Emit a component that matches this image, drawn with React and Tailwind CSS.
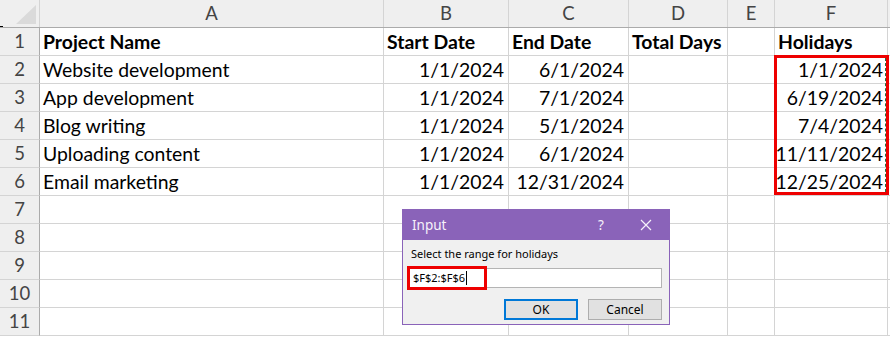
import React from 'react';

const cols = [
  { key: 'A', w: 'w-[344px]' },
  { key: 'B', w: 'w-[125px]' },
  { key: 'C', w: 'w-[120px]' },
  { key: 'D', w: 'w-[99px]' },
  { key: 'E', w: 'w-[47px]' },
  { key: 'F', w: 'w-[113px]' },
];

const rows = [
  ['Project Name', 'Start Date', 'End Date', 'Total Days', '', 'Holidays'],
  ['Website development', '1/1/2024', '6/1/2024', '', '', '1/1/2024'],
  ['App development', '1/1/2024', '7/1/2024', '', '', '6/19/2024'],
  ['Blog writing', '1/1/2024', '5/1/2024', '', '', '7/4/2024'],
  ['Uploading content', '1/1/2024', '6/1/2024', '', '', '11/11/2024'],
  ['Email marketing', '1/1/2024', '12/31/2024', '', '', '12/25/2024'],
  ['', '', '', '', '', ''],
  ['', '', '', '', '', ''],
  ['', '', '', '', '', ''],
  ['', '', '', '', '', ''],
  ['', '', '', '', '', ''],
];

function Cell({ col, value, header, ci }) {
  // dates are right aligned, text left aligned (like Excel)
  const right = !header && ci > 0;
  return (
    <div
      className={`${col.w} h-[28px] shrink-0 border-r border-b border-[#d4d4d4] flex items-center ${
        right ? 'justify-end pr-[4px]' : 'justify-start pl-[3px]'
      } ${header ? 'font-bold' : ''} whitespace-nowrap overflow-visible`}
    >
      {value}
    </div>
  );
}

function InputDialog() {
  return (
    <div className="absolute left-[402px] top-[209px] w-[268px] h-[116px] border border-[#8a63b9] bg-[#f0f0f0] flex flex-col font-['Noto_Sans',sans-serif]">
      <div className="h-[30px] bg-[#8a63b9] flex items-center text-[#f6f2fa] text-[13.5px] pl-[9px]">
        <span className="flex-1">Input</span>
        <span className="w-[20px] text-center mr-[29px]">?</span>
        <svg width="12" height="12" viewBox="0 0 12 12" className="mr-[17px]">
          <path d="M1 1 L11 11 M11 1 L1 11" stroke="#f6f2fa" strokeWidth="1.2" />
        </svg>
      </div>
      <div className="text-[11px] text-black pl-[8px] mt-[6px] leading-[16px]">Select the range for holidays</div>
      <div className="relative ml-[4px] mt-[6px] w-[255px] h-[20px] bg-white border border-[#b4b4b4] flex items-center pl-[5px] text-[11px] text-black">
        <span>$F$2:$F$6</span>
        <span className="w-px h-[14px] bg-black ml-px" />
        <div className="absolute left-[-1px] top-[-3px] w-[80px] h-[24px] border-[3px] border-[#ee0000]" />
      </div>
      <div className="flex justify-end gap-[10px] pr-[7px] mt-[11px]">
        <button className="w-[74px] h-[21px] border-2 border-[#0078d7] bg-[#e1e1e1] text-[12px] text-black flex items-center justify-center">
          OK
        </button>
        <button className="w-[74px] h-[21px] border border-[#adadad] bg-[#e1e1e1] text-[12px] text-black flex items-center justify-center">
          Cancel
        </button>
      </div>
    </div>
  );
}

export default function App() {
  return (
    <div className="relative w-[890px] h-[338px] overflow-hidden bg-white font-['Lato',sans-serif] text-[19.4px] text-black">
      {/* column headers */}
      <div className="flex h-[28px] bg-[#efefef] border-b border-[#ababab]">
        <div className="relative w-[40px] shrink-0 border-r border-[#d4d4d4]">
          <div className="absolute right-[3px] bottom-[3px] w-0 h-0 border-l-[20px] border-l-transparent border-b-[19px] border-b-[#dadada]" />
          <div className="absolute left-0 bottom-0 w-[3px] h-px bg-black" />
        </div>
        {cols.map((c) => (
          <div
            key={c.key}
            className={`${c.w} shrink-0 border-r border-[#d4d4d4] flex items-center justify-center text-[#444] text-[18.5px]`}
          >
            {c.key}
          </div>
        ))}
        <div className="flex-1" />
      </div>

      {/* rows */}
      {rows.map((r, ri) => (
        <div key={ri} className="flex">
          <div className="w-[40px] h-[28px] shrink-0 bg-[#efefef] border-r border-b border-[#ababab] border-b-[#d4d4d4] flex items-center justify-center text-[#444] text-[18.5px]">
            {ri + 1}
          </div>
          {cols.map((c, ci) => (
            <Cell key={c.key} col={c} ci={ci} value={r[ci]} header={ri === 0} />
          ))}
          <div className="flex-1 h-[28px] border-b border-[#d4d4d4]" />
        </div>
      ))}

      {/* copy selection on holidays */}
      <div className="absolute left-[885px] top-[58px] h-[134px] w-0 border-l border-dashed border-[#217346]" />
      <div className="absolute left-[774px] top-[55px] w-[115px] h-[140px] border-[3px] border-[#ee0000]" />

      <InputDialog />
    </div>
  );
}
